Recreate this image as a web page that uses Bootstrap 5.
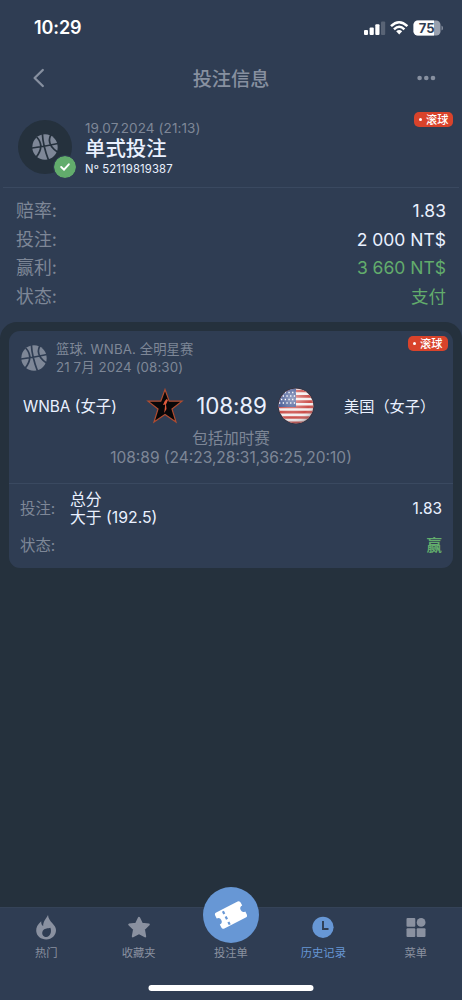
<!DOCTYPE html>
<html lang="zh-CN">
<head>
<meta charset="utf-8">
<meta name="viewport" content="width=device-width, initial-scale=1">
<title>投注信息</title>
<link href="https://cdn.jsdelivr.net/npm/bootstrap@5.3.0/dist/css/bootstrap.min.css" rel="stylesheet">
<style>
:root{--panel:#2f3d53;--deep:#25313d;--dim:#7e8797;--line:#3a4960;--bright:#eaf1ff;--win:#62ac6c;--blue:#6797d5}
body{background:var(--panel);color:var(--bright);font-family:Inter,"Noto Sans CJK SC",sans-serif;height:1000px;overflow:hidden}
svg{display:block;flex:none}
.dim{color:var(--dim)}.win{color:var(--win)}
.phone{height:1000px}
.statusbar{height:55px;padding:1px 19px 0 34px}
.clock{font-size:18px;font-weight:600;letter-spacing:-.1px;line-height:54px;color:#fff}
.topbar{height:46px;padding:0 26px 0 32px}
.topbar h1{font-size:19.2px;font-weight:500;line-height:46px;color:#8790a0;padding:2px 5px 0 0}
.ticket{height:87px;margin:0 3px;padding:19px 0 0 15px;border-bottom:1px solid var(--line)}
.disc{width:54px;height:54px;background:var(--deep)}
.ok{width:22px;height:22px;right:-4px;bottom:-4px;background:var(--win);outline:1.5px solid var(--panel)}
.info{margin-left:13px}
.when{font-size:13.5px;line-height:16px;letter-spacing:.1px}
.kind{font-size:20.4px;line-height:25px;font-weight:500}
.num{font-size:11.3px;line-height:16px;letter-spacing:.15px}
.live{height:15px;padding:0 4px 0 5px;border-radius:5px;background:#d9432b;color:#fff;font-size:11.2px;font-weight:500;line-height:15px}
.live i{width:3px;height:3px;background:#fff;margin-right:4px}
.live span{padding-top:1px}
.ticket .live{top:11px;right:6px;width:39px}
.sum{height:134px;padding:9px 16px 0}
.sum div{height:28.5px;line-height:28.5px;font-size:17.9px}
.sum .val{font-size:17.5px}
.lower{background:var(--deep);border-radius:17px 17px 0 0;padding:9px}
.game{height:237px;background:var(--panel);border-radius:11px}
.game .live{top:5px;right:5px;width:40px}
.gamehead{padding:7px 12px 0;height:47px}
.league{font-size:13.3px;line-height:18.5px;letter-spacing:.1px;margin-left:9px}
.match{height:52px;padding:3px 17px 0 14px}
.team{font-size:15.4px;padding-top:3px}
.home-team{width:123px}
.team-b{margin-left:29px;font-size:15.2px;white-space:nowrap}
.score{font-size:22.4px;width:95px;letter-spacing:-.1px}
.away-flag{margin-left:-2px}
.detail{font-size:15.5px;line-height:18.5px;height:54px;border-bottom:1px solid var(--line)}
.brow{padding:0 11px 0 11px;font-size:15.4px}
.brow .lab{width:50px}
.pick{line-height:18px;font-size:15.8px}
.b1{height:49px}.b2{height:26px}
.tabs{height:93px;background:var(--panel);border-top:1px solid #354358}
.tab{width:92.4px;font-size:11.3px;line-height:14px;color:#8a91a0;padding-top:6px}
.tab svg{margin-bottom:6px}
.tab .fab svg{margin:0}
.tab.on{color:var(--blue)}
.fab{width:56px;height:56px;background:var(--blue);top:-21px;left:18px}
.home{width:165px;height:6px;background:#fff;bottom:9px}
</style>
</head>
<body>
<svg width="0" height="0" class="position-absolute"><defs>
<symbol id="ball" viewBox="0 0 26 26"><circle cx="13" cy="13" r="12.7" fill="currentColor"/><g fill="none" stroke="var(--cut)" stroke-width="1.7"><path d="M10.4 0Q11 12 16.5 26M0 14Q13 12.5 26 9.5M4.7 3Q13 12 4.3 23M18.8 1Q14 10 25.5 18"/></g></symbol>
</defs></svg>
<main class="phone d-flex flex-column">
  <div class="statusbar d-flex justify-content-between align-items-center">
    <span class="clock">10:29</span>
    <svg width="79" height="18" viewBox="0 0 79 18"><g fill="#fff"><rect y="11" width="4" height="5" rx="1"/><rect x="5.6" y="8.5" width="4.2" height="7.5" rx="1"/><rect x="11.3" y="5.2" width="4.2" height="10.8" rx="1"/><rect x="17" y="2.5" width="4.2" height="13.5" rx="1" opacity=".2"/></g><g fill="none" stroke="#fff" stroke-width="2.5"><path d="M27 7.2Q35 -.8 43.4 7.2M30 10.3Q35.2 5.2 40.4 10.3"/></g><path d="M32.2 12.2Q35.2 9.8 38.2 12.2L35.2 15.6Z" fill="#fff"/><rect x="49.5" y="1.5" width="27" height="15" rx="4.3" fill="#98a0ae"/><path d="M53.8 1.5H70V16.5H53.8A4.3 4.3 0 0 1 49.5 12.2V5.8A4.3 4.3 0 0 1 53.8 1.5Z" fill="#fff"/><path d="M77.5 6.5Q79 7 79 9T77.5 11.5Z" fill="#8992a1"/><text x="62.7" y="13.8" text-anchor="middle" font-family="Inter" font-size="13" font-weight="700" fill="#2f3d53">75</text></svg>
  </div>
  <header class="topbar d-flex justify-content-between align-items-center">
    <svg width="18" height="20" viewBox="0 0 18 20"><path d="M10.8 2L2.6 10L10.8 18" fill="none" stroke="#8790a0" stroke-width="2.3" stroke-linecap="round" stroke-linejoin="round"/></svg>
    <h1 class="m-0">投注信息</h1>
    <svg width="19" height="6" viewBox="0 0 19 6" fill="#8790a0"><circle cx="2.6" cy="3" r="2.3"/><circle cx="9.3" cy="3" r="2.3"/><circle cx="16" cy="3" r="2.3"/></svg>
  </header>
  <section class="ticket position-relative d-flex align-items-start">
    <div class="disc rounded-circle position-relative d-flex align-items-center justify-content-center dim">
      <svg width="26" height="26" style="--cut:var(--deep)"><use href="#ball"/></svg>
      <span class="ok rounded-circle position-absolute d-flex align-items-center justify-content-center"><svg width="10" height="8" viewBox="0 0 10 8"><path d="M1.2 4L4 6.7L8.8 1.3" fill="none" stroke="#fff" stroke-width="1.9" stroke-linecap="round"/></svg></span>
    </div>
    <div class="info">
      <div class="when dim">19.07.2024 (21:13)</div>
      <div class="kind">单式投注</div>
      <div class="num">Nº 52119819387</div>
    </div>
    <span class="live position-absolute d-flex align-items-center"><i class="rounded-circle"></i><span>滚球</span></span>
  </section>
  <section class="sum">
    <div class="d-flex justify-content-between"><span class="dim">赔率:</span><span class="val">1.83</span></div>
    <div class="d-flex justify-content-between"><span class="dim">投注:</span><span class="val">2 000 NT$</span></div>
    <div class="d-flex justify-content-between"><span class="dim">赢利:</span><span class="val win">3 660 NT$</span></div>
    <div class="d-flex justify-content-between"><span class="dim">状态:</span><span class="val win">支付</span></div>
  </section>
  <section class="lower flex-grow-1">
    <article class="game position-relative">
      <div class="gamehead d-flex align-items-center dim">
        <svg width="26" height="26" style="--cut:var(--panel)"><use href="#ball"/></svg>
        <div class="league"><div>篮球. WNBA. 全明星赛</div><div>21 7月 2024 (08:30)</div></div>
      </div>
      <span class="live position-absolute d-flex align-items-center"><i class="rounded-circle"></i><span>滚球</span></span>
      <div class="match d-flex align-items-center">
        <span class="team home-team">WNBA (女子)</span>
        <svg width="38" height="38" viewBox="0 0 38 38"><path d="M19 2.5L23.2 14.2H36L26 22L30 35L19 27.5L8 35L12 22L2 14.2H14.8Z" fill="#080708" stroke="#b04c30" stroke-width="1.2"/><path d="M20.5 12L18.5 14.5L17 18L19.2 17.5L18.2 26L20.5 22L20 17.5L22 13Z" fill="#e05a3c"/></svg>
        <span class="score text-center">108:89</span>
        <svg class="away-flag" width="38" height="38" viewBox="0 0 38 38"><defs><clipPath id="round"><circle cx="19" cy="19" r="17.3"/></clipPath><radialGradient id="shade" cx=".4" cy=".3" r=".75"><stop offset="0" stop-color="#fff" stop-opacity=".5"/><stop offset=".65" stop-color="#fff" stop-opacity=".05"/><stop offset="1" stop-color="#30202a" stop-opacity=".55"/></radialGradient></defs><circle cx="19" cy="19" r="18.2" fill="#39323f"/><g clip-path="url(#round)"><path fill="#f3eeee" d="M0 0h38v38H0z"/><path stroke="#c8443f" stroke-width="2.7" d="M0 4h38M0 9.3h38M0 14.6h38M0 19.9h38M0 25.2h38M0 30.5h38M0 35.8h38"/><path fill="#2f4688" d="M0 0h19v20H0z"/><path d="M4 5.5h15M2 9h17M4 12.5h15M2 16h17" stroke="#fff" stroke-width="1.3" stroke-dasharray="1.3 2.4"/><path fill="url(#shade)" d="M0 0h38v38H0z"/></g></svg>
        <span class="team team-b">美国（女子）</span>
      </div>
      <div class="detail dim text-center"><div>包括加时赛</div><div>108:89 (24:23,28:31,36:25,20:10)</div></div>
      <div class="brow b1 d-flex align-items-center"><span class="lab dim">投注:</span><div class="pick">总分<br>大于 (192.5)</div><span class="ms-auto">1.83</span></div>
      <div class="brow b2 d-flex align-items-center"><span class="lab dim">状态:</span><span class="ms-auto win fw-bold">赢</span></div>
    </article>
  </section>
  <nav class="tabs position-relative d-flex">
    <div class="tab d-flex flex-column align-items-center"><svg width="22" height="26" viewBox="0 0 22 26"><path fill="currentColor" fill-rule="evenodd" d="M13 1C11 5 8 7.5 8.2 12C6.4 11 6.2 9 6.2 7.2C2.5 10.4 1 13.5 1.2 17C1.8 22.5 6 25.4 11.2 25.4C17 25.4 21 21.4 21 16C21 10.6 13.6 8 13 1ZM15.4 13.8C13.5 14.5 8.2 14 7.3 18.2C6.8 21 9 23 11.3 23C15.2 22.8 17 18 15.4 13.8Z"/></svg>热门</div>
    <div class="tab d-flex flex-column align-items-center"><svg width="24" height="26" viewBox="0 0 24 26"><path d="M12 3.8L14.9 9.8L21.8 10.6L16.9 15.3L18.2 22.4L12 19.2L5.8 22.4L7.1 15.3L2.2 10.6L9.1 9.8Z" fill="currentColor" stroke="currentColor" stroke-width="2" stroke-linejoin="round"/></svg>收藏夹</div>
    <div class="tab position-relative d-flex flex-column align-items-center"><span class="fab rounded-circle position-absolute d-flex align-items-center justify-content-center"><svg width="36" height="32" viewBox="0 0 36 32"><g transform="rotate(-27 18 16)"><path fill="#fff" d="M6 7H30Q32.3 7 32.3 9.5V12.6A3.4 3.4 0 0 0 32.3 19.4V22.5Q32.3 25 30 25H6Q3.7 25 3.7 22.5V19.4A3.4 3.4 0 0 0 3.7 12.6V9.5Q3.7 7 6 7Z"/><path d="M12.5 9V25" stroke="#6797d5" stroke-width="2.2" stroke-dasharray="3 3"/></g></svg></span><svg width="22" height="26"></svg>投注单</div>
    <div class="tab on d-flex flex-column align-items-center"><svg width="22" height="26" viewBox="0 0 22 26"><circle cx="11" cy="13.3" r="10.6" fill="currentColor"/><path d="M11 7V15H16.5" fill="none" stroke="#2f3d53" stroke-width="1.9"/></svg>历史记录</div>
    <div class="tab d-flex flex-column align-items-center"><svg width="20" height="26" viewBox="0 0 20 26" fill="currentColor"><rect x=".5" y="4" width="8.8" height="8.8" rx="1"/><circle cx="15.1" cy="8.4" r="4.4"/><rect x=".5" y="14.2" width="8.8" height="8.8" rx="1"/><rect x="10.7" y="14.2" width="8.8" height="8.8" rx="1"/></svg>菜单</div>
    <span class="home rounded-pill position-absolute start-50 translate-middle-x"></span>
  </nav>
</main>
<script src="https://cdn.jsdelivr.net/npm/bootstrap@5.3.0/dist/js/bootstrap.bundle.min.js"></script>
</body>
</html>
